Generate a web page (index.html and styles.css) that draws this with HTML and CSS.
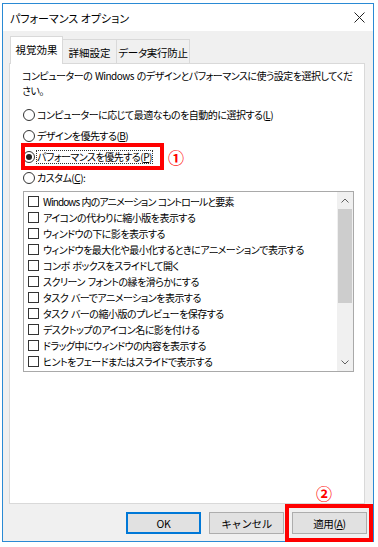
FILE: index.html
```html
<!DOCTYPE html>
<html>
<head>
<meta charset="utf-8">
<link rel="stylesheet" href="styles.css">
</head>
<body>

<div class="window">
    <div class="titlebar">
        <span class="title">パフォーマンス オプション</span>
        <svg class="close" width="11" height="11" viewBox="0 0 11 11">
            <path d="M0.5 0.5 L10.5 10.5 M10.5 0.5 L0.5 10.5" stroke="#222" stroke-width="1" fill="none"/>
        </svg>
    </div>

    <div class="tabs">
        <div class="tab active">視覚効果</div>
        <div class="tab second">詳細設定</div>
        <div class="tab third">データ実行防止</div>
    </div>

    <div class="panel">
        <p class="desc">コンピューターの Windows のデザインとパフォーマンスに使う設定を選択してくだ<br>さい。</p>

        <div class="radios">
            <div class="radio"><span class="circle"></span>コンピューターに応じて最適なものを自動的に選択する(<u>L</u>)</div>
            <div class="radio"><span class="circle"></span>デザインを優先する(<u>B</u>)</div>
            <div class="radio"><span class="circle checked"></span><span class="focus">パフォーマンスを優先する(<u>P</u>)</span></div>
            <div class="radio"><span class="circle"></span>カスタム(<u>C</u>):</div>
        </div>

        <div class="list">
            <div class="items">
                <div class="item"><span class="box"></span><span class="tight">Windows 内のアニメーション コントロールと要素</span></div>
                <div class="item"><span class="box"></span>アイコンの代わりに縮小版を表示する</div>
                <div class="item"><span class="box"></span>ウィンドウの下に影を表示する</div>
                <div class="item"><span class="box"></span>ウィンドウを最大化や最小化するときにアニメーションで表示する</div>
                <div class="item"><span class="box"></span>コンボ ボックスをスライドして開く</div>
                <div class="item"><span class="box"></span>スクリーン フォントの縁を滑らかにする</div>
                <div class="item"><span class="box"></span>タスク バーでアニメーションを表示する</div>
                <div class="item"><span class="box"></span>タスク バーの縮小版のプレビューを保存する</div>
                <div class="item"><span class="box"></span>デスクトップのアイコン名に影を付ける</div>
                <div class="item"><span class="box"></span>ドラッグ中にウィンドウの内容を表示する</div>
                <div class="item"><span class="box"></span>ヒントをフェードまたはスライドで表示する</div>
                <div class="item"><span class="box"></span>マウス ポインターの下に影を表示する</div>
            </div>
            <div class="scrollbar">
                <div class="arrow">
                    <svg width="8" height="5" viewBox="0 0 8 5"><path d="M0.5 4.5 L4 1 L7.5 4.5" stroke="#606060" fill="none"/></svg>
                </div>
                <div class="thumb"></div>
                <div class="arrow down">
                    <svg width="8" height="5" viewBox="0 0 8 5"><path d="M0.5 0.5 L4 4 L7.5 0.5" stroke="#606060" fill="none"/></svg>
                </div>
            </div>
        </div>
    </div>

    <div class="buttons">
        <button class="btn default">OK</button>
        <button class="btn">キャンセル</button>
        <button class="btn">適用(<u>A</u>)</button>
    </div>
</div>

<!-- red annotations drawn over the dialog -->
<div class="mark mark1"></div>
<div class="num num1">①</div>
<div class="mark mark2"></div>
<div class="num num2">②</div>

</body>
</html>
```

FILE: styles.css
```css
body {
    margin: 0;
    background: #fff;
    font-family: "Noto Sans CJK JP", sans-serif;
    font-size: 11px;
    color: #000;
    font-feature-settings: "palt";
}

.window {
    margin: 3px 0 0 2px;
    width: 370px;
    height: 537px;
    border: 1px solid #2a8ad4;
    background: #f0f0f0;
    display: flex;
    flex-direction: column;
}

.titlebar {
    height: 27px;
    flex: none;
    background: #fff;
    display: flex;
    align-items: center;
    justify-content: space-between;
    padding: 0 8px 0 7px;
}

.tabs {
    height: 33px;
    flex: none;
    display: flex;
    align-items: flex-end;
    padding-left: 7px;
    margin-bottom: -1px;
    font-size: 10.5px;
    white-space: nowrap;
}
.tab {
    box-sizing: border-box;
    height: 25px;
    border: 1px solid #d9d9d9;
    border-bottom: none;
    background: #f0f0f0;
    display: flex;
    align-items: center;
    justify-content: center;
}
.tab.active {
    width: 53px;
    height: 28px;
    padding-bottom: 2px;
    background: #fff;
    position: relative;
    z-index: 1;
}
.tab.second {
    width: 54px;
    border-left: none;
}
.tab.third {
    width: 73px;
    border-left: none;
    letter-spacing: -0.3px;
}

.panel {
    flex: none;
    margin: 0 8px 0 6px;
    height: 439px;
    border: 1px solid #d9d9d9;
    background: #fff;
    font-size: 10px;
    letter-spacing: -0.5px;
    word-spacing: 1px;
}

.desc {
    margin: 0;
    padding: 4px 0 0 12px;
    line-height: 15px;
    white-space: nowrap;
}

.radios {
    margin-top: 6px;
    padding-left: 13px;
}
.radio {
    height: 21px;
    display: flex;
    align-items: center;
    white-space: nowrap;
}
.circle {
    box-sizing: border-box;
    flex: none;
    width: 12px;
    height: 12px;
    margin-right: 2px;
    border: 1px solid #333;
    border-radius: 50%;
    display: flex;
    align-items: center;
    justify-content: center;
}
.circle.checked::after {
    content: "";
    width: 6px;
    height: 6px;
    border-radius: 50%;
    background: #222;
}
.focus {
    outline: 1px dotted #333;
    line-height: 12px;
}

.list {
    box-sizing: border-box;
    margin: 3px 0 0 13px;
    width: 331px;
    height: 181px;
    border: 1px solid #a9a9a9;
    display: flex;
    overflow: hidden;
}
.items {
    flex: 1;
    padding: 1px 0 0 4px;
    overflow: hidden;
}
.item {
    height: 16px;
    display: flex;
    align-items: center;
    white-space: nowrap;
}
.tight {
    letter-spacing: -0.9px;
}
.box {
    box-sizing: border-box;
    flex: none;
    width: 11px;
    height: 11px;
    margin-right: 4px;
    border: 1px solid #333;
}

.scrollbar {
    flex: none;
    width: 16px;
    background: #f0f0f0;
    display: flex;
    flex-direction: column;
}
.arrow {
    height: 17px;
    display: flex;
    align-items: center;
    justify-content: center;
}
.arrow.down {
    margin-top: auto;
}
.thumb {
    height: 94px;
    margin: 0 1px;
    background: #cdcdcd;
}

.buttons {
    display: flex;
    justify-content: flex-end;
    gap: 8px;
    margin-top: 8px;
    padding-right: 6px;
}
.btn {
    box-sizing: border-box;
    width: 75px;
    height: 22px;
    padding: 0;
    background: #e1e1e1;
    border: 1px solid #adadad;
    font-family: inherit;
    font-size: 10.5px;
    letter-spacing: -0.4px;
    color: #000;
}
.btn.default {
    border-color: #0078d7;
    box-shadow: inset 0 0 0 1px #0078d7;
}

.mark {
    position: absolute;
    border: 4px solid #f00;
}
.mark1 {
    left: 21px;
    top: 143px;
    width: 135px;
    height: 19px;
}
.mark2 {
    left: 285px;
    top: 504px;
    width: 80px;
    height: 30px;
}
.num {
    position: absolute;
    color: #f00;
    font-size: 16px;
    font-weight: bold;
    line-height: 16px;
}
.num1 {
    left: 168px;
    top: 149px;
}
.num2 {
    left: 316px;
    top: 485px;
}
```
